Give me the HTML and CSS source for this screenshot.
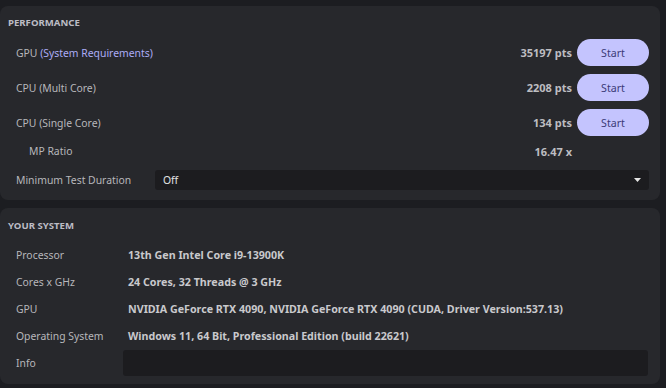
FILE: index.html
```html
<!DOCTYPE html>
<html>
<head>
<meta charset="utf-8">
<link rel="stylesheet" href="styles.css">
</head>
<body>
<div class="app">
  <section class="panel perf">
    <h2 class="panel-title">PERFORMANCE</h2>
    <div class="row bench">
      <span class="label">GPU <span class="link">(System Requirements)</span></span>
      <span class="score">35197 pts</span>
      <button class="start">Start</button>
    </div>
    <div class="row bench">
      <span class="label">CPU (Multi Core)</span>
      <span class="score">2208 pts</span>
      <button class="start">Start</button>
    </div>
    <div class="row bench">
      <span class="label">CPU (Single Core)</span>
      <span class="score">134 pts</span>
      <button class="start">Start</button>
    </div>
    <div class="row ratio">
      <span class="label indent">MP Ratio</span>
      <span class="score">16.47 x</span>
      <span class="spacer"></span>
    </div>
    <div class="row duration">
      <span class="label">Minimum Test Duration</span>
      <div class="select"><span>Off</span><svg class="caret" width="7" height="4" viewBox="0 0 7 4"><path d="M0 0H7L3.5 4Z" fill="#e6e6e6"/></svg></div>
    </div>
  </section>
  <section class="panel sys">
    <h2 class="panel-title">YOUR SYSTEM</h2>
    <div class="info-grid">
      <span class="label">Processor</span><span class="value">13th Gen Intel Core i9-13900K</span>
      <span class="label">Cores x GHz</span><span class="value">24 Cores, 32 Threads @ 3 GHz</span>
      <span class="label">GPU</span><span class="value">NVIDIA GeForce RTX 4090, NVIDIA GeForce RTX 4090 (CUDA, Driver Version:537.13)</span>
      <span class="label">Operating System</span><span class="value">Windows 11, 64 Bit, Professional Edition (build 22621)</span>
      <span class="label">Info</span><div class="info-box"></div>
    </div>
  </section>
</div>
</body>
</html>
```
FILE: styles.css
```css
* { box-sizing: border-box; }
html, body { margin: 0; padding: 0; }
body {
  background: #1c1d21;
  font-family: "Noto Sans", "Open Sans", sans-serif;
  font-size: 10.4px;
  color: #b9b9bd;
  width: 666px;
  height: 388px;
  overflow: hidden;
}
.app {
  display: flex;
  flex-direction: column;
  gap: 8px;
  padding: 6px 6px 0 0;
}
.panel {
  background: #27282c;
  border-radius: 8px;
}
.perf { height: 194px; padding: 10px 11px 0 0; }
.sys { height: 176px; padding: 11px 12px 0 0; }
.panel-title {
  margin: 0 0 0 8px;
  height: 14px;
  line-height: 14px;
  font-size: 9.6px;
  font-weight: 700;
  color: #bcbcc4;
}
.perf .panel-title { margin-bottom: 5px; }
.row {
  display: flex;
  align-items: center;
  padding-left: 16px;
}
.bench { height: 35px; }
.ratio { height: 22px; }
.duration { height: 36px; }
.label { flex: 1; color: #b7b7bb; }
.label.indent { padding-left: 13px; }
.link { color: #acacf6; }
.score {
  font-size: 11px;
  font-weight: 700;
  color: #bdbdc1;
  margin-right: 5px;
}
.start, .spacer {
  width: 72px;
  height: 27px;
  flex: none;
}
.start {
  border: none;
  border-radius: 14px;
  background: #c4c4fe;
  color: #3b3b78;
  font-family: inherit;
  font-size: 10.6px;
  padding: 0;
}
.select {
  width: 494px;
  height: 20px;
  background: #1c1c1f;
  border-radius: 3px;
  display: flex;
  align-items: center;
  justify-content: space-between;
  padding: 0 8px 0 8px;
  color: #e2e2e4;
}
.duration .label { flex: none; width: 139px; }
.info-grid {
  display: grid;
  grid-template-columns: 107px 1fr;
  grid-template-rows: 27px 27px 27px 27px 28px;
  align-items: center;
  padding-left: 16px;
  margin-top: 8px;
}
.value {
  padding-left: 5px;
  font-size: 10.7px;
  font-weight: 700;
  color: #c9c9cc;
  white-space: nowrap;
}
.info-box {
  height: 26px;
  background: #1c1c1f;
  border-radius: 3px;
}
```
